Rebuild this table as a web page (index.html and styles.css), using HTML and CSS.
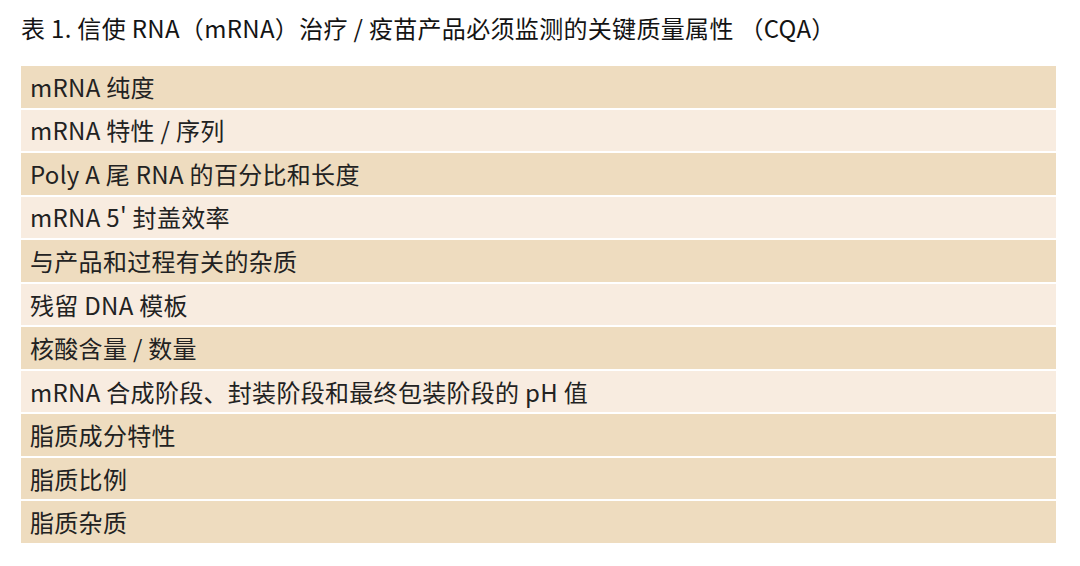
FILE: index.html
```html
<!DOCTYPE html>
<html lang="zh-CN">
<head>
<meta charset="utf-8">
<link rel="stylesheet" href="styles.css">
</head>
<body>
<div class="page">
  <h1 class="title">表 1. 信使 RNA（mRNA）治疗 / 疫苗产品必须监测的关键质量属性 （CQA）</h1>
  <div class="table">
    <div class="row dark">mRNA 纯度</div>
    <div class="row light">mRNA 特性 / 序列</div>
    <div class="row dark">Poly A 尾 RNA 的百分比和长度</div>
    <div class="row light">mRNA 5' 封盖效率</div>
    <div class="row dark">与产品和过程有关的杂质</div>
    <div class="row light">残留 DNA 模板</div>
    <div class="row dark">核酸含量 / 数量</div>
    <div class="row light">mRNA 合成阶段、封装阶段和最终包装阶段的 pH 值</div>
    <div class="row dark">脂质成分特性</div>
    <div class="row dark">脂质比例</div>
    <div class="row dark">脂质杂质</div>
  </div>
</div>
</body>
</html>
```

FILE: styles.css
```css
html, body {
  margin: 0;
  padding: 0;
  background: #ffffff;
}
.page {
  width: 1080px;
  height: 566px;
  padding: 12px 24px 0 21px;
  box-sizing: border-box;
  font-family: "Noto Sans CJK SC", "Noto Sans", sans-serif;
  color: #222222;
}
.title {
  margin: 0;
  font-size: 24px;
  font-weight: 400;
  line-height: 32px;
  height: 54px;
  color: #141414;
  letter-spacing: 0.32px;
}
.table {
  display: flex;
  flex-direction: column;
  gap: 2px;
  width: 1035px;
}
.row {
  height: 41.55px;
  display: flex;
  align-items: center;
  padding-left: 9px;
  font-size: 24px;
  line-height: 1;
  letter-spacing: 0.3px;
}
.dark { background: #eedcbf; }
.light { background: #f8ece0; }
```
